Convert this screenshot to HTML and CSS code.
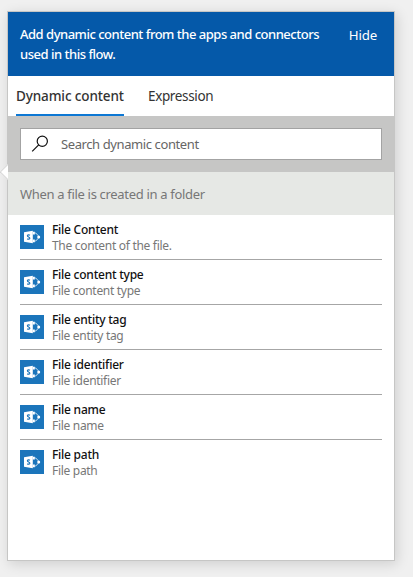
FILE: index.html
```html
<!DOCTYPE html>
<html lang="en">
<head>
<meta charset="utf-8">
<title>Dynamic content</title>
<link rel="stylesheet" href="styles.css">
</head>
<body>
<svg class="defs" width="0" height="0" aria-hidden="true">
  <symbol id="sharepoint" viewBox="0 0 24 24">
    <path d="M4 7.2 12.8 5.8V18.2L4 16.8Z" fill="#fff"/>
    <path d="M9.9 10.3C9.2 9.7 7.4 9.7 7.4 10.8 7.4 12.1 9.8 11.8 9.8 13.2 9.8 14.4 8 14.4 7.2 13.8" fill="none" stroke="#1b75bb" stroke-width="1.2"/>
    <path d="M14.5 7.7C16.5 8.2 18 9.8 18.8 12M14.5 16.3C16.5 15.8 18 14.2 18.8 12" fill="none" stroke="#fff" stroke-width=".9" opacity=".8"/>
    <path d="M12.8 6.8h2v2.6h-2zM12.8 14.6h2v2.6h-2z" fill="#fff"/>
    <circle cx="18.7" cy="12" r="1.5" fill="#fff"/>
  </symbol>
</svg>
<main class="panel">
  <span class="pointer"></span>
  <header class="banner">
    <p class="message">Add dynamic content from the apps and connectors<br>used in this flow.</p>
    <a class="hide">Hide</a>
  </header>
  <nav class="tabs">
    <a class="tab active">Dynamic content</a>
    <a class="tab">Expression</a>
  </nav>
  <div class="search">
    <label class="field">
      <svg class="glass" width="18" height="18" viewBox="0 0 18 18"><circle cx="11.3" cy="6.3" r="5.1"/><path d="M7.7 9.9 1.2 16.4"/></svg>
      <span class="hint">Search dynamic content</span>
    </label>
  </div>
  <h2 class="section">When a file is created in a folder</h2>
  <ul class="list">
    <li class="row"><svg class="icon"><use href="#sharepoint"/></svg><div><b>File Content</b><p>The content of the file.</p></div></li>
    <li class="row"><svg class="icon"><use href="#sharepoint"/></svg><div><b>File content type</b><p>File content type</p></div></li>
    <li class="row"><svg class="icon"><use href="#sharepoint"/></svg><div><b>File entity tag</b><p>File entity tag</p></div></li>
    <li class="row"><svg class="icon"><use href="#sharepoint"/></svg><div><b>File identifier</b><p>File identifier</p></div></li>
    <li class="row"><svg class="icon"><use href="#sharepoint"/></svg><div><b>File name</b><p>File name</p></div></li>
    <li class="row"><svg class="icon"><use href="#sharepoint"/></svg><div><b>File path</b><p>File path</p></div></li>
  </ul>
</main>
</body>
</html>
```
FILE: styles.css
```css
* { box-sizing: border-box; }
body {
  margin: 0;
  padding: 11px 0 0 7px;
  height: 577px;
  overflow: hidden;
  background: #f0f0f0;
  font-family: "Noto Sans", "Open Sans", sans-serif;
  color: #333;
}
p, ul, h2 { margin: 0; padding: 0; }
.defs { position: absolute; }
.panel {
  position: relative;
  width: 388px;
  height: 550px;
  background: #fff;
  border: 1px solid #c6c6c5;
  box-shadow: 2px 3px 12px rgba(0, 0, 0, .14);
}
.pointer {
  position: absolute;
  left: -6px;
  top: 154px;
  width: 12px;
  height: 12px;
  background: #fff;
  border: 1px solid #d0d0d0;
  transform: rotate(45deg);
  clip-path: polygon(0 0, 0 100%, 100% 100%);
}
.banner {
  display: flex;
  justify-content: space-between;
  height: 64px;
  padding: 12px 17px 0 12px;
  background: #0559a9;
  color: #fff;
}
.message { font-size: 13px; line-height: 20px; font-weight: 500; letter-spacing: -.49px; white-space: nowrap; }
.hide { font-size: 13.3px; line-height: 23px; letter-spacing: -.2px; }
.tabs { display: flex; gap: 24px; height: 40px; padding: 0 8px; }
.tab { height: 40px; line-height: 41px; font-size: 13.5px; letter-spacing: -.36px; }
.active { width: 108px; white-space: nowrap; font-weight: 500; letter-spacing: -.12px; border-bottom: 2px solid #0e78d4; }
.search { height: 56px; padding: 12px; background: #c6c6c5; }
.field {
  display: flex;
  align-items: center;
  width: 362px;
  height: 32px;
  padding-left: 10px;
  background: #fff;
  border: 1px solid #a3a3a3;
}
.glass { fill: none; stroke: #111; stroke-width: 1.2; margin-right: 12px; }
.hint { font-size: 13px; letter-spacing: -.4px; color: #666; }
.section {
  height: 43px;
  padding-left: 12px;
  line-height: 45px;
  background: #e6e8e5;
  color: #777;
  font-size: 13px;
  font-weight: 400;
  letter-spacing: -.32px;
}
.list { list-style: none; padding: 0 12px; }
.row { display: flex; gap: 8px; height: 45px; padding-top: 7px; border-bottom: 1px solid #a6a6a6; }
.row:last-child { border-bottom: 0; }
.icon { width: 24px; height: 24px; margin-top: 3px; background: #1b75bb; }
.row b { display: block; font-size: 12px; line-height: 16px; font-weight: 500; letter-spacing: -.24px; color: #111; }
.row p { font-size: 12px; line-height: 16px; letter-spacing: -.3px; color: #777; }
```
